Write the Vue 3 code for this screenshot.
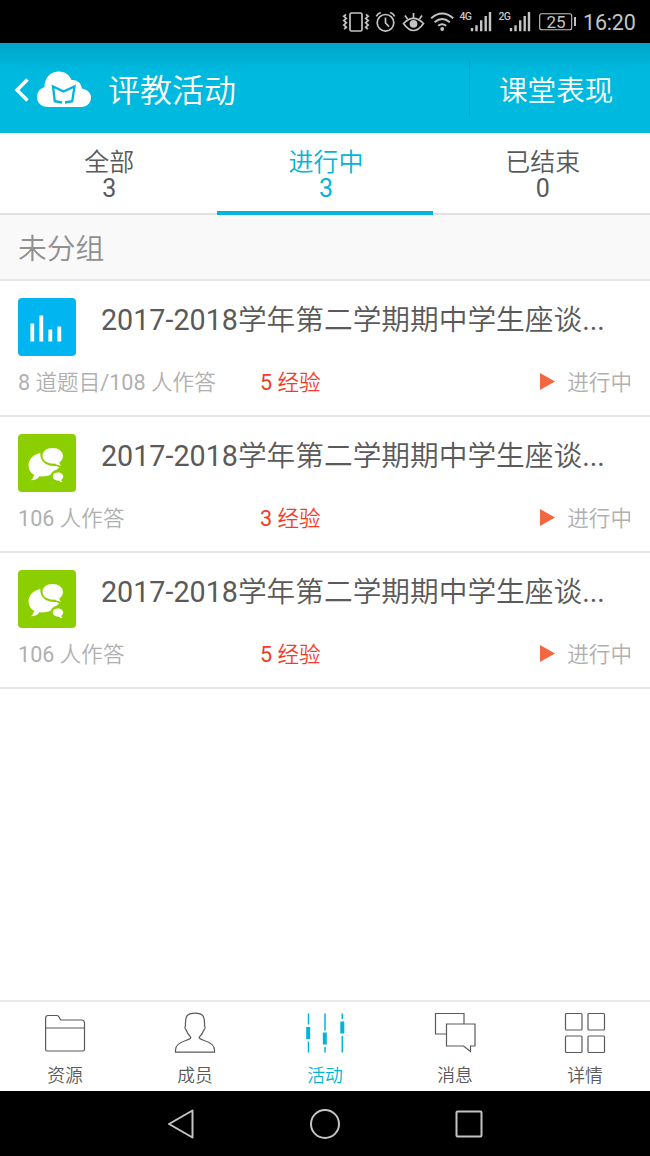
<template>
  <div class="screen">
    <!-- Barre de statut -->
    <div class="status-bar">
      <svg class="status-icons" width="234" height="43" viewBox="340 0 234 43" fill="none" stroke="#c4c4c4" stroke-width="1.7">
        <rect x="350" y="13" width="12" height="18" rx="1.5" />
        <path d="M346 14.500l-2.200 1.700 2.500 2.200-2.500 2.200 2.500 2.200-2.500 2.200 2.500 2.200-2.200 1.800M366 14.500l2.200 1.700-2.500 2.200 2.500 2.200-2.500 2.200 2.500 2.200-2.500 2.200 2.200 1.800" />
        <circle cx="385.500" cy="22.800" r="8.300" />
        <path d="M385.500 17.500v5.500l3.500 3.600M376.300 16.300q1.500-3 4.500-3.800M394.700 16.300q-1.500-3-4.500-3.800" />
        <path d="M403.500 23.500q10-10 20 0q-10 14-20 0z" />
        <circle cx="413.500" cy="23.800" r="3.900" fill="#c4c4c4" stroke="none" />
        <path d="M413.500 18v-5M407.500 19l-2.500-3.500M419.500 19l2.500-3.500" />
        <path d="M431.200 18.200q11-9.500 22 0M434.600 22.200q7.600-6.400 15.200 0M438.200 25.800q4-3 8 0" stroke-width="2" />
        <circle cx="442.200" cy="29" r="1.900" fill="#c4c4c4" stroke="none" />
        <g v-for="x in [0, 39]" :key="x" :transform="`translate(${x})`" stroke-width="2.400">
          <path d="M472 31.200v-3.200M476.500 31.200v-6M481.200 31.200v-11M485.700 31.200v-15.200M490 31.200v-19.200" />
        </g>
        <rect x="539.700" y="13.700" width="32" height="16" rx="2" stroke-width="1.100" />
        <text class="network" x="459.500" y="20.200">4G</text>
        <text class="network" x="498.500" y="20.200">2G</text>
        <text class="battery" x="546.500" y="27.500">25</text>
      </svg>
      <span class="battery-tip"></span>
      <span class="clock">16:20</span>
    </div>

    <!-- En-tête -->
    <header class="header">
      <svg class="back" width="16" height="26" viewBox="0 0 16 26">
        <path d="M13.500 2.500L3 13l10.500 10.500" fill="none" stroke="#fff" stroke-width="3.500" />
      </svg>
      <svg class="cloud" width="54" height="37" viewBox="0 0 54 37">
        <path d="M11 36C4 36 0 31.500 0 26c0-5 3-8.500 7.500-10C7.500 6 14 .5 22 .5c6 0 10.500 3.500 12.500 8.500 5.500-.8 10 3 10.300 8.500C50.500 18.500 54 22 54 26.500 54 32 50 36 44 36z" fill="#fff" />
        <path d="M25 31.500l-7.200-1.300L16 15.500l10.500 5 11-5-2.300 14.700-7.200 1.300" fill="none" stroke="#00b5da" stroke-width="2.300" />
      </svg>
      <h1>评教活动</h1>
      <span class="header-action">课堂表现</span>
    </header>

    <!-- Onglets -->
    <div class="tabs">
      <div v-for="tab in tabs" :key="tab.label" class="tab" :class="{ active: tab.label === currentTab }" @click="currentTab = tab.label">
        <span>{{ tab.label }}</span>
        <span>{{ tab.count }}</span>
      </div>
    </div>

    <div class="group-title">未分组</div>

    <!-- Liste des activités -->
    <div class="list">
      <div v-for="item in items" :key="item.id" class="item">
        <div class="item-top">
          <div class="tile" :class="item.type">
            <svg v-if="item.type === 'poll'" width="58" height="58" viewBox="0 0 58 58">
              <path d="M14.300 43.500V25.500M23.300 43.500V17.500M32.300 43.500V31.500M41.300 43.500V28.500" stroke="#fff" stroke-width="3.800" />
            </svg>
            <svg v-else width="58" height="58" viewBox="0 0 58 58" fill="#fff">
              <path d="M22.300 19C15 20.500 10.500 25.500 10.500 31.500c0 4 2 7.300 5.500 9.300-.2 2.200-1.200 4-3 5.500 4 0 6.500-1.500 8.500-4 4 .4 8 0 11-1.500 1-2.500 3-4 6-5l3-2.300-3.500-1.500C29 33 21.500 27 22.300 19z" />
              <path d="M34.500 14c6 0 10.500 3.400 10.500 8 0 2.600-1.300 4.800-3.500 6.200 0 1.500.6 2.500 1.500 3.600-3.500-.3-5-1.200-6-2.200-7.300.6-12.500-3-12.500-7.600 0-4.600 4-8 10-8z" />
              <path d="M40 38.500c3 0 5.200 1.800 5.200 4 0 1.300-.7 2.500-1.800 3.200l.5 2.600c-1.500-.3-2.500-.9-3.300-1.800-3.300.2-5.800-1.600-5.800-4s2.200-4 5.200-4z" />
            </svg>
          </div>
          <div class="item-title">2017-2018学年第二学期期中学生座谈...</div>
        </div>
        <div class="item-meta">
          <span class="answers">{{ item.answers }}</span>
          <span class="points">{{ item.points }} 经验</span>
          <span class="state">
            <svg width="15" height="17" viewBox="0 0 15 17"><path d="M0 0l15 8.500L0 17z" fill="#f26640" /></svg>
            进行中
          </span>
        </div>
      </div>
    </div>

    <!-- Barre de navigation -->
    <nav class="tab-bar">
      <div v-for="entry in menu" :key="entry.label" class="entry" :class="{ active: entry.label === '活动' }">
        <svg width="42" height="42" viewBox="0 0 42 42" fill="none" stroke="currentColor" stroke-width="1.200">
          <g v-if="entry.icon === 'folder'">
            <path d="M1.600 37.500V6q0-2.500 2.500-2.500H13q1.500 0 2.300 2T17 8h20.500q3 0 3 3v26.500q0 1.500-1.500 1.500H3q-1.400 0-1.400-1.500zM1.600 16h38.900" />
          </g>
          <g v-else-if="entry.icon === 'user'">
            <path d="M1.500 40.200v-2.200c0-5 5-8 11-9.800 3-.9 4.600-1.700 4.200-3-1.600-1.800-3.700-4.500-4.700-7.500-1.300-1-1.300-3-.5-3.900C11 5 12.500 1.200 21 1.200S31 5 30.500 13.800c.8.900.8 2.900-.5 3.900-1 3-3.100 5.700-4.700 7.500-.4 1.300 1.200 2.100 4.200 3 6 1.800 11 4.800 11 9.800v2.200z" />
          </g>
          <g v-else-if="entry.icon === 'sliders'">
            <path d="M4.500 1.500v11M4.500 29.500v11M21 1.500v17M21 35v5.500M38.300 1.500v5.500M38.300 24v16.500" stroke-width="1.500" />
            <path d="M4.200 15v12M20.800 20.500v12M38.300 9.500v12" stroke-width="4" />
          </g>
          <g v-else-if="entry.icon === 'chat'">
            <path d="M12.500 22H1.500V1.500H30V12M12.500 12H41v22h-4.500v5.500L29.500 34h-17z" />
          </g>
          <g v-else>
            <rect x="1.500" y="1.500" width="16.500" height="16.500" rx="1" />
            <rect x="24" y="1.500" width="16.500" height="16.500" rx="1" />
            <rect x="1.500" y="24" width="16.500" height="16.500" rx="1" />
            <rect x="24" y="24" width="16.500" height="16.500" rx="1" />
          </g>
        </svg>
        <span>{{ entry.label }}</span>
      </div>
    </nav>

    <!-- Touches système -->
    <div class="system-bar">
      <svg width="30" height="34" viewBox="0 0 30 34"><path d="M26.500 3.500v27L3 17z" /></svg>
      <svg width="30" height="34" viewBox="0 0 30 34"><circle cx="15" cy="17" r="14" /></svg>
      <svg width="30" height="34" viewBox="0 0 30 34"><rect x="2.500" y="4.500" width="25" height="25" rx="1" /></svg>
    </div>
  </div>
</template>

<script setup>
import { ref } from 'vue';

const currentTab = ref('进行中');

const tabs = [
  { label: '全部', count: 3 },
  { label: '进行中', count: 3 },
  { label: '已结束', count: 0 },
];

const items = [
  { id: 1, type: 'poll', answers: '8 道题目/108 人作答', points: 5 },
  { id: 2, type: 'talk', answers: '106 人作答', points: 3 },
  { id: 3, type: 'talk', answers: '106 人作答', points: 5 },
];

const menu = [
  { label: '资源', icon: 'folder' },
  { label: '成员', icon: 'user' },
  { label: '活动', icon: 'sliders' },
  { label: '消息', icon: 'chat' },
  { label: '详情', icon: 'grid' },
];
</script>

<style>
body {
  margin: 0;
}
</style>

<style scoped>
.screen {
  width: 650px;
  height: 1156px;
  display: flex;
  flex-direction: column;
  background: #fff;
  color: #5a5a5a;
  font-family: Roboto, "Noto Sans CJK SC DemiLight", "Noto Sans CJK SC", sans-serif;
  font-weight: 400;
  overflow: hidden;
}

svg {
  display: block;
  flex: none;
}

.status-bar {
  height: 43px;
  flex: none;
  display: flex;
  align-items: center;
  justify-content: flex-end;
  padding-right: 14px;
  box-sizing: border-box;
  background: #000;
  color: #c4c4c4;
}

.network,
.battery {
  fill: #c4c4c4;
  stroke: none;
}

.network {
  font-size: 10.500px;
  font-weight: 500;
  letter-spacing: -0.8px;
}

.battery {
  font-size: 17px;
}

.battery-tip {
  width: 2px;
  height: 9px;
  background: #c4c4c4;
}

.clock {
  width: 53px;
  margin-left: 7px;
  font-size: 21.500px;
  letter-spacing: -0.2px;
  line-height: 43px;
  padding-top: 2px;
}

.header {
  height: 90px;
  flex: none;
  display: flex;
  align-items: center;
  background: linear-gradient(#00a5c8, #00b9df 28px);
  color: #fff;
}

.back {
  margin: 3px 0 0 14px;
}

.cloud {
  margin: 3px 0 0 7px;
}

h1 {
  flex: 1;
  margin: 0 0 0 17px;
  font-size: 32px;
  font-weight: 300;
}

.header-action {
  width: 181px;
  height: 57px;
  box-sizing: border-box;
  padding-left: 29px;
  border-left: 1px solid #00a3c6;
  font-size: 28.600px;
  font-weight: 300;
  line-height: 62px;
}

.tabs {
  height: 82px;
  flex: none;
  display: flex;
  box-sizing: border-box;
  box-shadow: inset 0 -2px #e0e0e0;
}

.tab {
  flex: 1;
  display: flex;
  flex-direction: column;
  align-items: center;
  box-sizing: border-box;
  padding: 17px 0 0 2px;
  font-size: 25px;
  line-height: 26px;
  border-bottom: 4px solid transparent;
}

.tab.active {
  color: #00b5da;
  border-bottom-color: #00b5da;
}

.group-title {
  height: 66px;
  flex: none;
  box-sizing: border-box;
  padding-left: 18px;
  background: #f9f9f9;
  border-bottom: 2px solid #e8e8e8;
  color: #909090;
  font-size: 28.800px;
  line-height: 68px;
}

.list {
  flex: 1;
}

.item {
  height: 136px;
  box-sizing: border-box;
  padding: 17px 18px 0;
  border-bottom: 2px solid #e8e8e8;
}

.item-top {
  display: flex;
}

.tile {
  width: 58px;
  height: 58px;
  border-radius: 4px;
}

.tile.poll {
  background: #00b5f0;
}

.tile.talk {
  background: #8ccf00;
}

.item-title {
  margin-left: 25px;
  font-size: 28.700px;
  line-height: 45px;
  white-space: nowrap;
}

.item-meta {
  display: flex;
  margin-top: 10px;
  font-size: 21.600px;
  line-height: 33px;
  color: #b0b0b0;
}

.answers {
  width: 242px;
}

.points {
  flex: 1;
  color: #f23c28;
}

.state {
  display: flex;
  align-items: center;
  gap: 12px;
}

.state svg {
  margin-top: -2px;
}

.tab-bar {
  height: 91px;
  flex: none;
  display: flex;
  box-sizing: border-box;
  border-top: 2px solid #e8e8e8;
}

.entry {
  flex: 1;
  display: flex;
  flex-direction: column;
  align-items: center;
  padding-top: 10px;
  font-size: 17.800px;
  line-height: 26px;
}

.entry span {
  margin-top: 9px;
}

.entry.active {
  color: #00b5da;
}

.system-bar {
  height: 65px;
  flex: none;
  display: flex;
  align-items: center;
  justify-content: center;
  gap: 114px;
  background: #000;
}

.system-bar path,
.system-bar circle,
.system-bar rect {
  fill: none;
  stroke: #c4c4c4;
  stroke-width: 2;
  stroke-linejoin: round;
}
</style>
